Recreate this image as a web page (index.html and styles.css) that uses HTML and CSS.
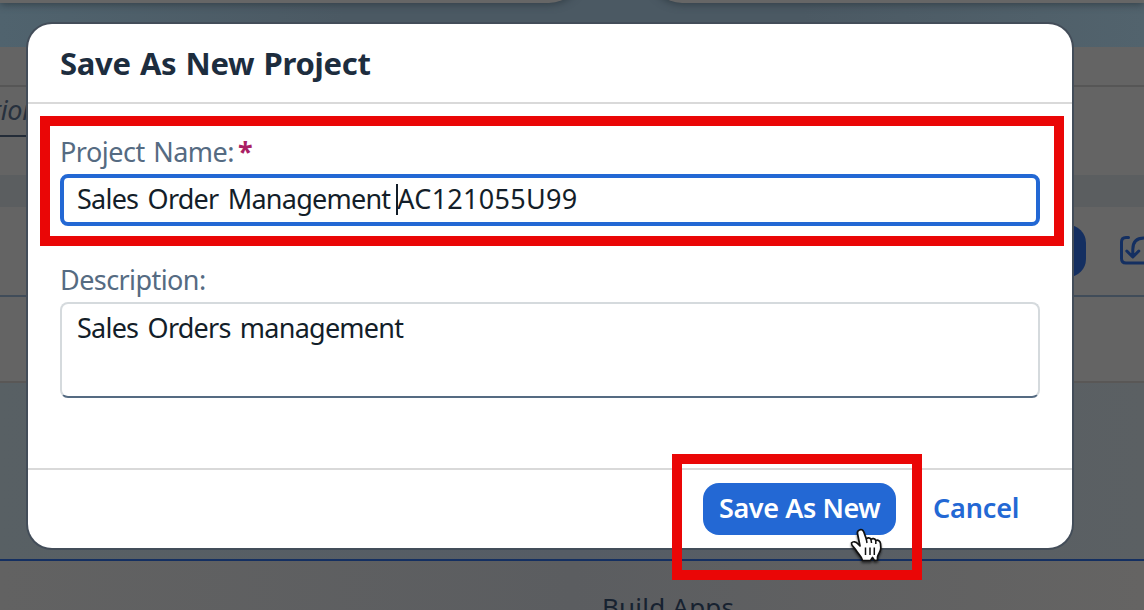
FILE: index.html
```html
<!DOCTYPE html>
<html lang="en">
<head>
<meta charset="utf-8">
<title>Save As New Project</title>
<link rel="stylesheet" href="styles.css">
</head>
<body>
<div class="page">
  <div class="banner"><div class="card card-left"></div><div class="card card-right"></div></div>
  <div class="head"></div>
  <div class="search"><span>tion</span></div>
  <div class="space"></div>
  <div class="strip"></div>
  <div class="toolbar">
    <div class="bg-button"></div>
    <svg class="import" viewBox="0 0 36 36" fill="none" stroke="#142f61" stroke-width="3" stroke-linecap="round" stroke-linejoin="round"><path d="M10.500 4.500H8Q3.500 4.500 3.500 9V25.500Q3.500 30 8 30H36M14.800 23.500V16.500Q14.800 5 26 5H36M8.800 18L14.800 24L20.800 18"/></svg>
  </div>
  <div class="row"></div>
  <div class="canvas"></div>
  <div class="bottom"><span>Build Apps</span></div>
</div>
<div class="dialog">
  <header class="dialog-head"><h1>Save As New Project</h1></header>
  <main class="dialog-body">
    <label class="label"><span class="name-label">Project Name:</span><span class="star">*</span></label>
    <div class="input"><span class="value-a">Sales Order Management</span><i class="caret"></i><span class="value-b">AC121055U99</span></div>
    <label class="label label-desc"><span class="desc-label">Description:</span></label>
    <div class="textarea"><span class="value-c">Sales Orders management</span></div>
  </main>
  <footer class="dialog-foot">
    <button class="save"><span>Save As New</span></button>
    <button class="cancel"><span>Cancel</span></button>
  </footer>
</div>
<div class="mark mark-name"></div>
<div class="mark mark-save"></div>
<svg class="cursor" viewBox="0 0 34 38"><path d="M9.500 3C11 2 13 2.800 13.800 5L16.300 12C17 10.300 20 10.300 21 12.500C22.500 11 25 11.500 25.800 13.500C28 12.500 30.300 14 30.500 16.500L30.800 21C30.800 25 28 27 27.500 30V33L24.500 33.500L22.500 30.500L20.500 33.500H12.500C11.500 29 7.500 26.500 5.500 22.500C4 20 1 18.500 1.500 16C3 14 6 14.500 8 17L10 19L7.500 6.500C7.200 5 8 3.500 9.500 3Z" fill="#fff" stroke="#111" stroke-width="1.700" stroke-linejoin="round"/><path d="M16.300 12L17 16M21 12.500L21.500 16M25.800 13.500V17M15.500 20.500V28M20 20.500V28M24.300 20.500V28" fill="none" stroke="#111" stroke-width="1.500"/></svg>
</body>
</html>
```
FILE: styles.css
```css
* { box-sizing: border-box; }
body { margin: 0; width: 1144px; height: 610px; overflow: hidden; font-family: "Noto Sans", sans-serif; }
span, h1 { white-space: nowrap; }
.page { height: 610px; display: flex; flex-direction: column; background: #646464; }
.page > div { flex: none; }
.banner { height: 47px; overflow: hidden; display: flex; justify-content: space-between; background: linear-gradient(90deg, #50636e, #4b5963 30%, #4b5963 70%, #52636d); }
.card { height: 32px; margin-top: -29px; background: #666; box-shadow: 0 1px 8px #303c44; }
.card-left { width: 581px; border-radius: 0 0 32px 0; }
.card-right { width: 494px; border-radius: 0 0 0 32px; }
.head { height: 40px; border-bottom: 2px solid #565656; }
.search { height: 50px; width: 80px; border-bottom: 2px solid #232c38; color: #27313e; font: italic 27px/46px "Noto Sans", sans-serif; letter-spacing: -0.3px; }
.search span { margin-left: -8px; }
.space { height: 38px; }
.strip { height: 32px; background: #5b5e60; }
.toolbar { height: 90px; border-bottom: 2px solid #404c59; display: flex; justify-content: flex-end; align-items: flex-start; padding-top: 18px; gap: 32px; overflow: hidden; }
.bg-button { width: 120px; height: 52px; background: #142f61; border-radius: 18px; }
.import { width: 36px; height: 36px; margin: 8px -10px 0 0; flex: none; }
.row { height: 86px; border-bottom: 2px solid #595756; }
.canvas { height: 178px; background: linear-gradient(90deg, #586064, #555c65 50%, #5b6063); border-bottom: 2px solid #142f61; }
.bottom { height: 49px; overflow: hidden; padding: 28px 0 0 602px; color: #172230; font-size: 26px; line-height: 36px; background: linear-gradient(90deg, #626262, #5b5d60 50%, #656463); }
.bottom span { letter-spacing: 0.2px; }
.dialog { position: absolute; left: 28px; top: 24px; width: 1044px; height: 524px; display: flex; flex-direction: column; background: #fff; border-radius: 24px; box-shadow: 0 0 0 2px #434d59; }
.dialog-head { height: 80px; padding: 17px 32px; border-bottom: 2px solid #d9d9d9; }
h1 { margin: 0; font-size: 31px; line-height: 44px; font-weight: 700; color: #1d2d3e; letter-spacing: -0.3px; word-spacing: 1.5px; }
.dialog-body { flex: 1; padding: 28px 32px 0; }
.label { height: 42px; padding-bottom: 2px; display: flex; align-items: center; color: #556b82; font-size: 27px; line-height: 40px; }
.name-label { letter-spacing: -0.5px; word-spacing: 2px; }
.desc-label { letter-spacing: -0.58px; }
.star { color: #aa2064; font-weight: 700; font-size: 27px; margin-left: 4px; }
.input { height: 52px; display: flex; align-items: center; padding: 0 0 2px 13px; border: 4px solid #2368d4; border-radius: 8px; color: #131e29; font-size: 27px; line-height: 40px; }
.value-a { letter-spacing: -0.76px; word-spacing: 3px; }
.value-b { letter-spacing: 0.28px; margin-left: -1px; }
.value-c { letter-spacing: -0.76px; word-spacing: 3px; }
.caret { width: 2px; height: 31px; margin-left: 6px; background: #131e29; }
.label-desc { margin-top: 34px; }
.textarea { height: 96px; padding: 4px 15px; border: 2px solid #d5dadd; border-bottom-color: #556b82; border-radius: 8px; color: #131e29; font-size: 27px; line-height: 40px; }
.dialog-foot { height: 80px; border-top: 2px solid #d9d9d9; display: flex; justify-content: flex-end; padding: 13px 38px 0 0; gap: 21px; }
button { height: 52px; border: 0; border-radius: 16px; padding: 0 16px 2px; font: 600 27px/48px "Noto Sans", sans-serif; text-align: left; letter-spacing: -0.4px; }
.save { width: 193px; background: #2368d4; color: #fff; }
.cancel { width: 117px; background: none; color: #2368d4; letter-spacing: -0.15px; }
.mark { position: absolute; border: 10px solid #ea0606; }
.mark-name { left: 40px; top: 116px; width: 1024px; height: 130px; }
.mark-save { left: 672px; top: 454px; width: 250px; height: 126px; }
.cursor { position: absolute; left: 850px; top: 527px; width: 34px; height: 38px; filter: drop-shadow(0 2px 1px #0008); }
```
